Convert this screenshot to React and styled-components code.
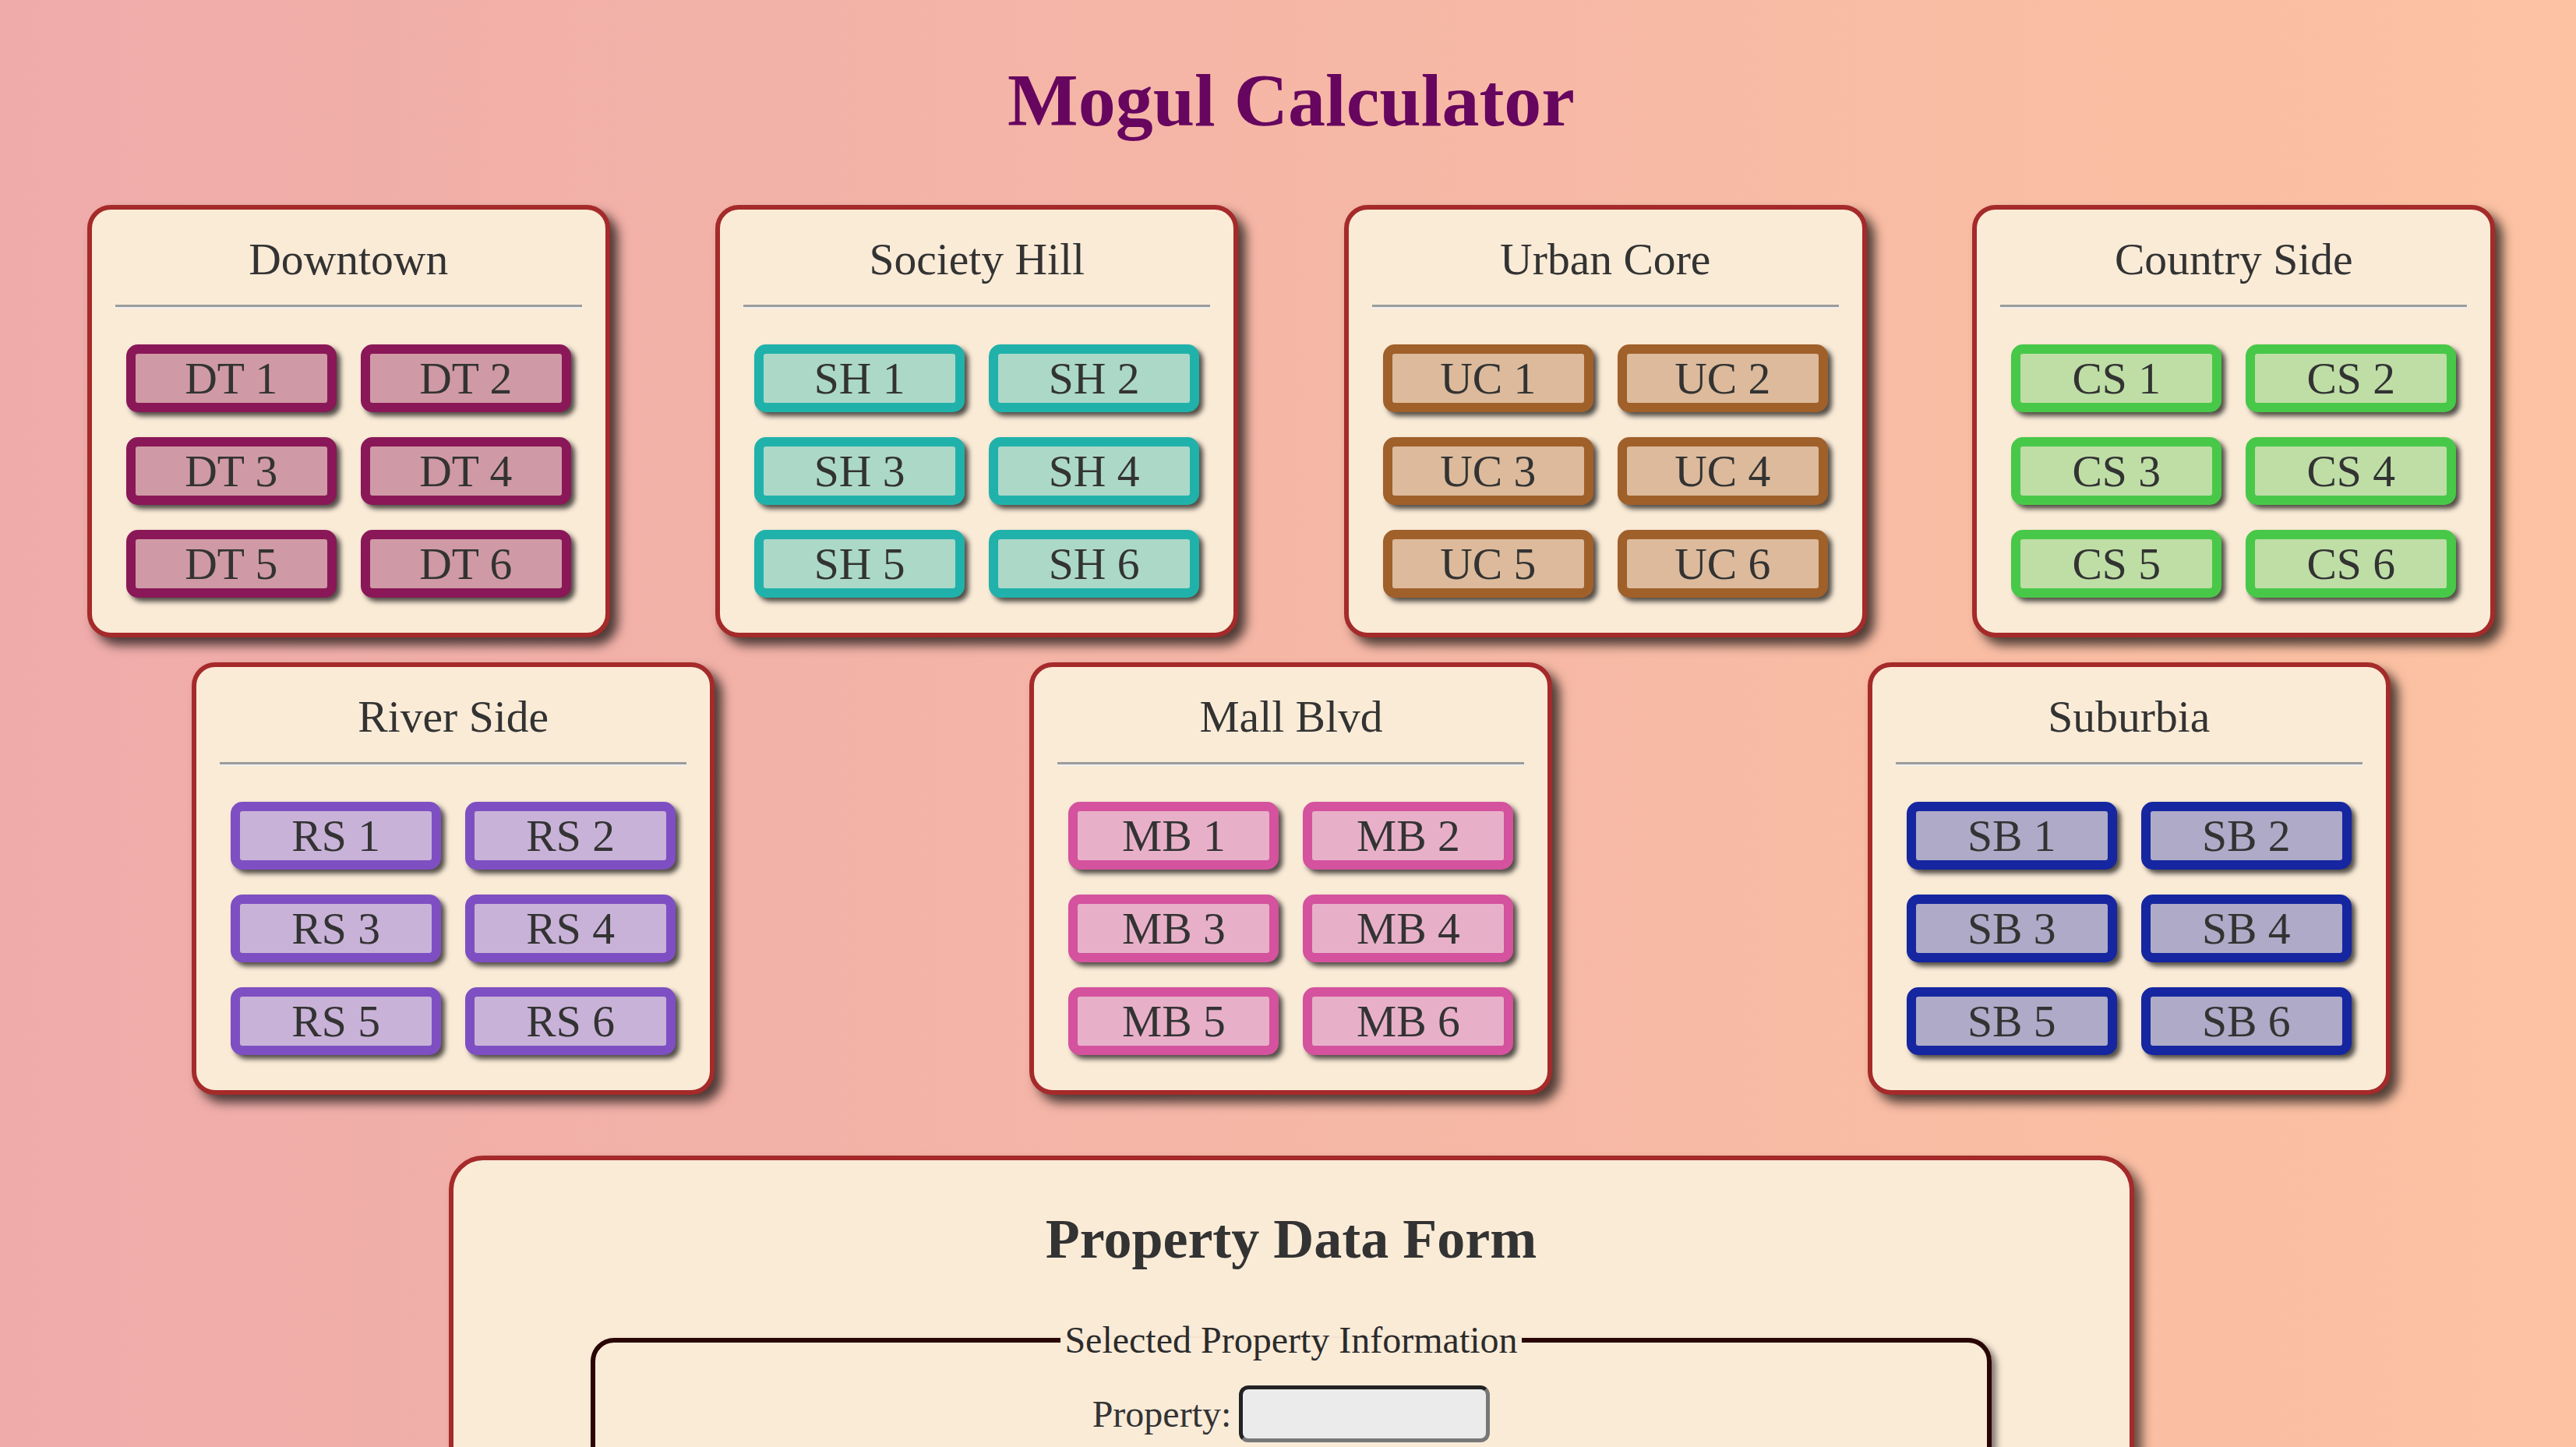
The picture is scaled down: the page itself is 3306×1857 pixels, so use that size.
import React from 'react';
import styled, { createGlobalStyle } from 'styled-components';

const GlobalStyle = createGlobalStyle`
  html {
    scrollbar-width: none;
  }
  html, body {
    margin: 0;
    padding: 0;
  }
  body {
    background: linear-gradient(to right, #efabaa, #fcc2a2);
    min-height: 100vh;
    font-family: "Liberation Serif", "Times New Roman", serif;
    color: #333;
  }
`;

const Page = styled.div`
  margin-left: 8px;
  padding-top: 74px;
  padding-bottom: 80px;
`;

const MainTitle = styled.h1`
  margin: 0;
  font-size: 96px;
  line-height: 110px;
  font-weight: bold;
  text-align: center;
  color: #66065f;
`;

const Districts = styled.div`
  display: flex;
  flex-wrap: wrap;
  justify-content: space-around;
  padding: 0 36px;
  margin-top: 63px;
`;

const Card = styled.section`
  box-sizing: border-box;
  width: 671px;
  margin: 16px;
  padding: 31px 30px 45px;
  background: #faebd7;
  border: 6px solid #a52a2a;
  border-radius: 30px;
  box-shadow: 10px 10px 14px rgba(0, 0, 0, 0.68);
`;

const CardTitle = styled.h2`
  margin: 0;
  font-size: 57.6px;
  line-height: 66px;
  font-weight: normal;
  text-align: center;
  color: #333;
`;

const Divider = styled.hr`
  height: 0;
  margin: 25px 0 46px;
  border: 0;
  border-top: 3px solid #9c9c9c;
  border-bottom: 2px solid #efefef;
`;

const ButtonGrid = styled.div`
  display: grid;
  grid-template-columns: repeat(2, 270px);
  column-gap: 31px;
  row-gap: 32px;
  justify-content: center;
`;

const PropertyButton = styled.button`
  box-sizing: border-box;
  width: 270px;
  height: 87px;
  padding: 0;
  border: 12px solid ${(p) => p.$border};
  border-radius: 15px;
  background: ${(p) => p.$fill};
  color: #333;
  font-family: "Liberation Serif", "Times New Roman", serif;
  font-size: 57.6px;
  line-height: 63px;
  box-shadow: 5px 5px 6px rgba(0, 0, 0, 0.68);
  cursor: pointer;
`;

const FormCard = styled.form`
  box-sizing: border-box;
  width: 2163px;
  margin: 62px auto 0;
  padding: 60px 0 60px;
  background: #faebd7;
  border: 6px solid #a52a2a;
  border-radius: 44px;
  box-shadow: 10px 10px 14px rgba(0, 0, 0, 0.6);
`;

const FormTitle = styled.h2`
  margin: 0;
  font-size: 72px;
  line-height: 83px;
  font-weight: bold;
  text-align: center;
  color: #333;
`;

const InfoSet = styled.fieldset`
  box-sizing: border-box;
  width: 1798px;
  margin: 60px auto 0;
  padding: 31px 40px 40px;
  border: 6px solid #2a0505;
  border-radius: 30px;
  box-shadow: 6px 6px 8px rgba(0, 0, 0, 0.5);
`;

const InfoLegend = styled.legend`
  margin: 0 auto;
  padding: 0 5px;
  font-size: 48px;
  line-height: 55px;
  color: #2b2b2b;
`;

const FieldRow = styled.div`
  display: flex;
  justify-content: center;
  align-items: center;
  gap: 10px;
  margin-bottom: 30px;
`;

const FieldLabel = styled.label`
  font-size: 48px;
  line-height: 55px;
  color: #333;
`;

const FieldInput = styled.input`
  box-sizing: border-box;
  width: 322px;
  height: 73px;
  border: 5px solid;
  border-color: #222 #777 #777 #222;
  border-radius: 12px;
  background: #ebebeb;
  font-family: "Liberation Serif", "Times New Roman", serif;
  font-size: 40px;
`;

const districts = [
  { name: 'Downtown', code: 'DT', border: '#8a1858', fill: '#cf9aa5' },
  { name: 'Society Hill', code: 'SH', border: '#20b2aa', fill: '#acd8c8' },
  { name: 'Urban Core', code: 'UC', border: '#a0602a', fill: '#dcba9b' },
  { name: 'Country Side', code: 'CS', border: '#48c848', fill: '#bedea6' },
  { name: 'River Side', code: 'RS', border: '#7e4fc2', fill: '#c9b2d8' },
  { name: 'Mall Blvd', code: 'MB', border: '#d4529e', fill: '#e8b0c8' },
  { name: 'Suburbia', code: 'SB', border: '#1526a0', fill: '#aeaac8' },
];

export default function App() {
  return (
    <>
      <GlobalStyle />
      <Page>
        <MainTitle>Mogul Calculator</MainTitle>
        <Districts>
          {districts.map((d) => (
            <Card key={d.code}>
              <CardTitle>{d.name}</CardTitle>
              <Divider />
              <ButtonGrid>
                {[1, 2, 3, 4, 5, 6].map((n) => (
                  <PropertyButton
                    key={n}
                    type="button"
                    $border={d.border}
                    $fill={d.fill}
                  >
                    {d.code} {n}
                  </PropertyButton>
                ))}
              </ButtonGrid>
            </Card>
          ))}
        </Districts>
        <FormCard onSubmit={(e) => e.preventDefault()}>
          <FormTitle>Property Data Form</FormTitle>
          <InfoSet>
            <InfoLegend>Selected Property Information</InfoLegend>
            <FieldRow>
              <FieldLabel htmlFor="field-property">Property:</FieldLabel>
              <FieldInput id="field-property" type="text" disabled />
            </FieldRow>
          </InfoSet>
        </FormCard>
      </Page>
    </>
  );
}
